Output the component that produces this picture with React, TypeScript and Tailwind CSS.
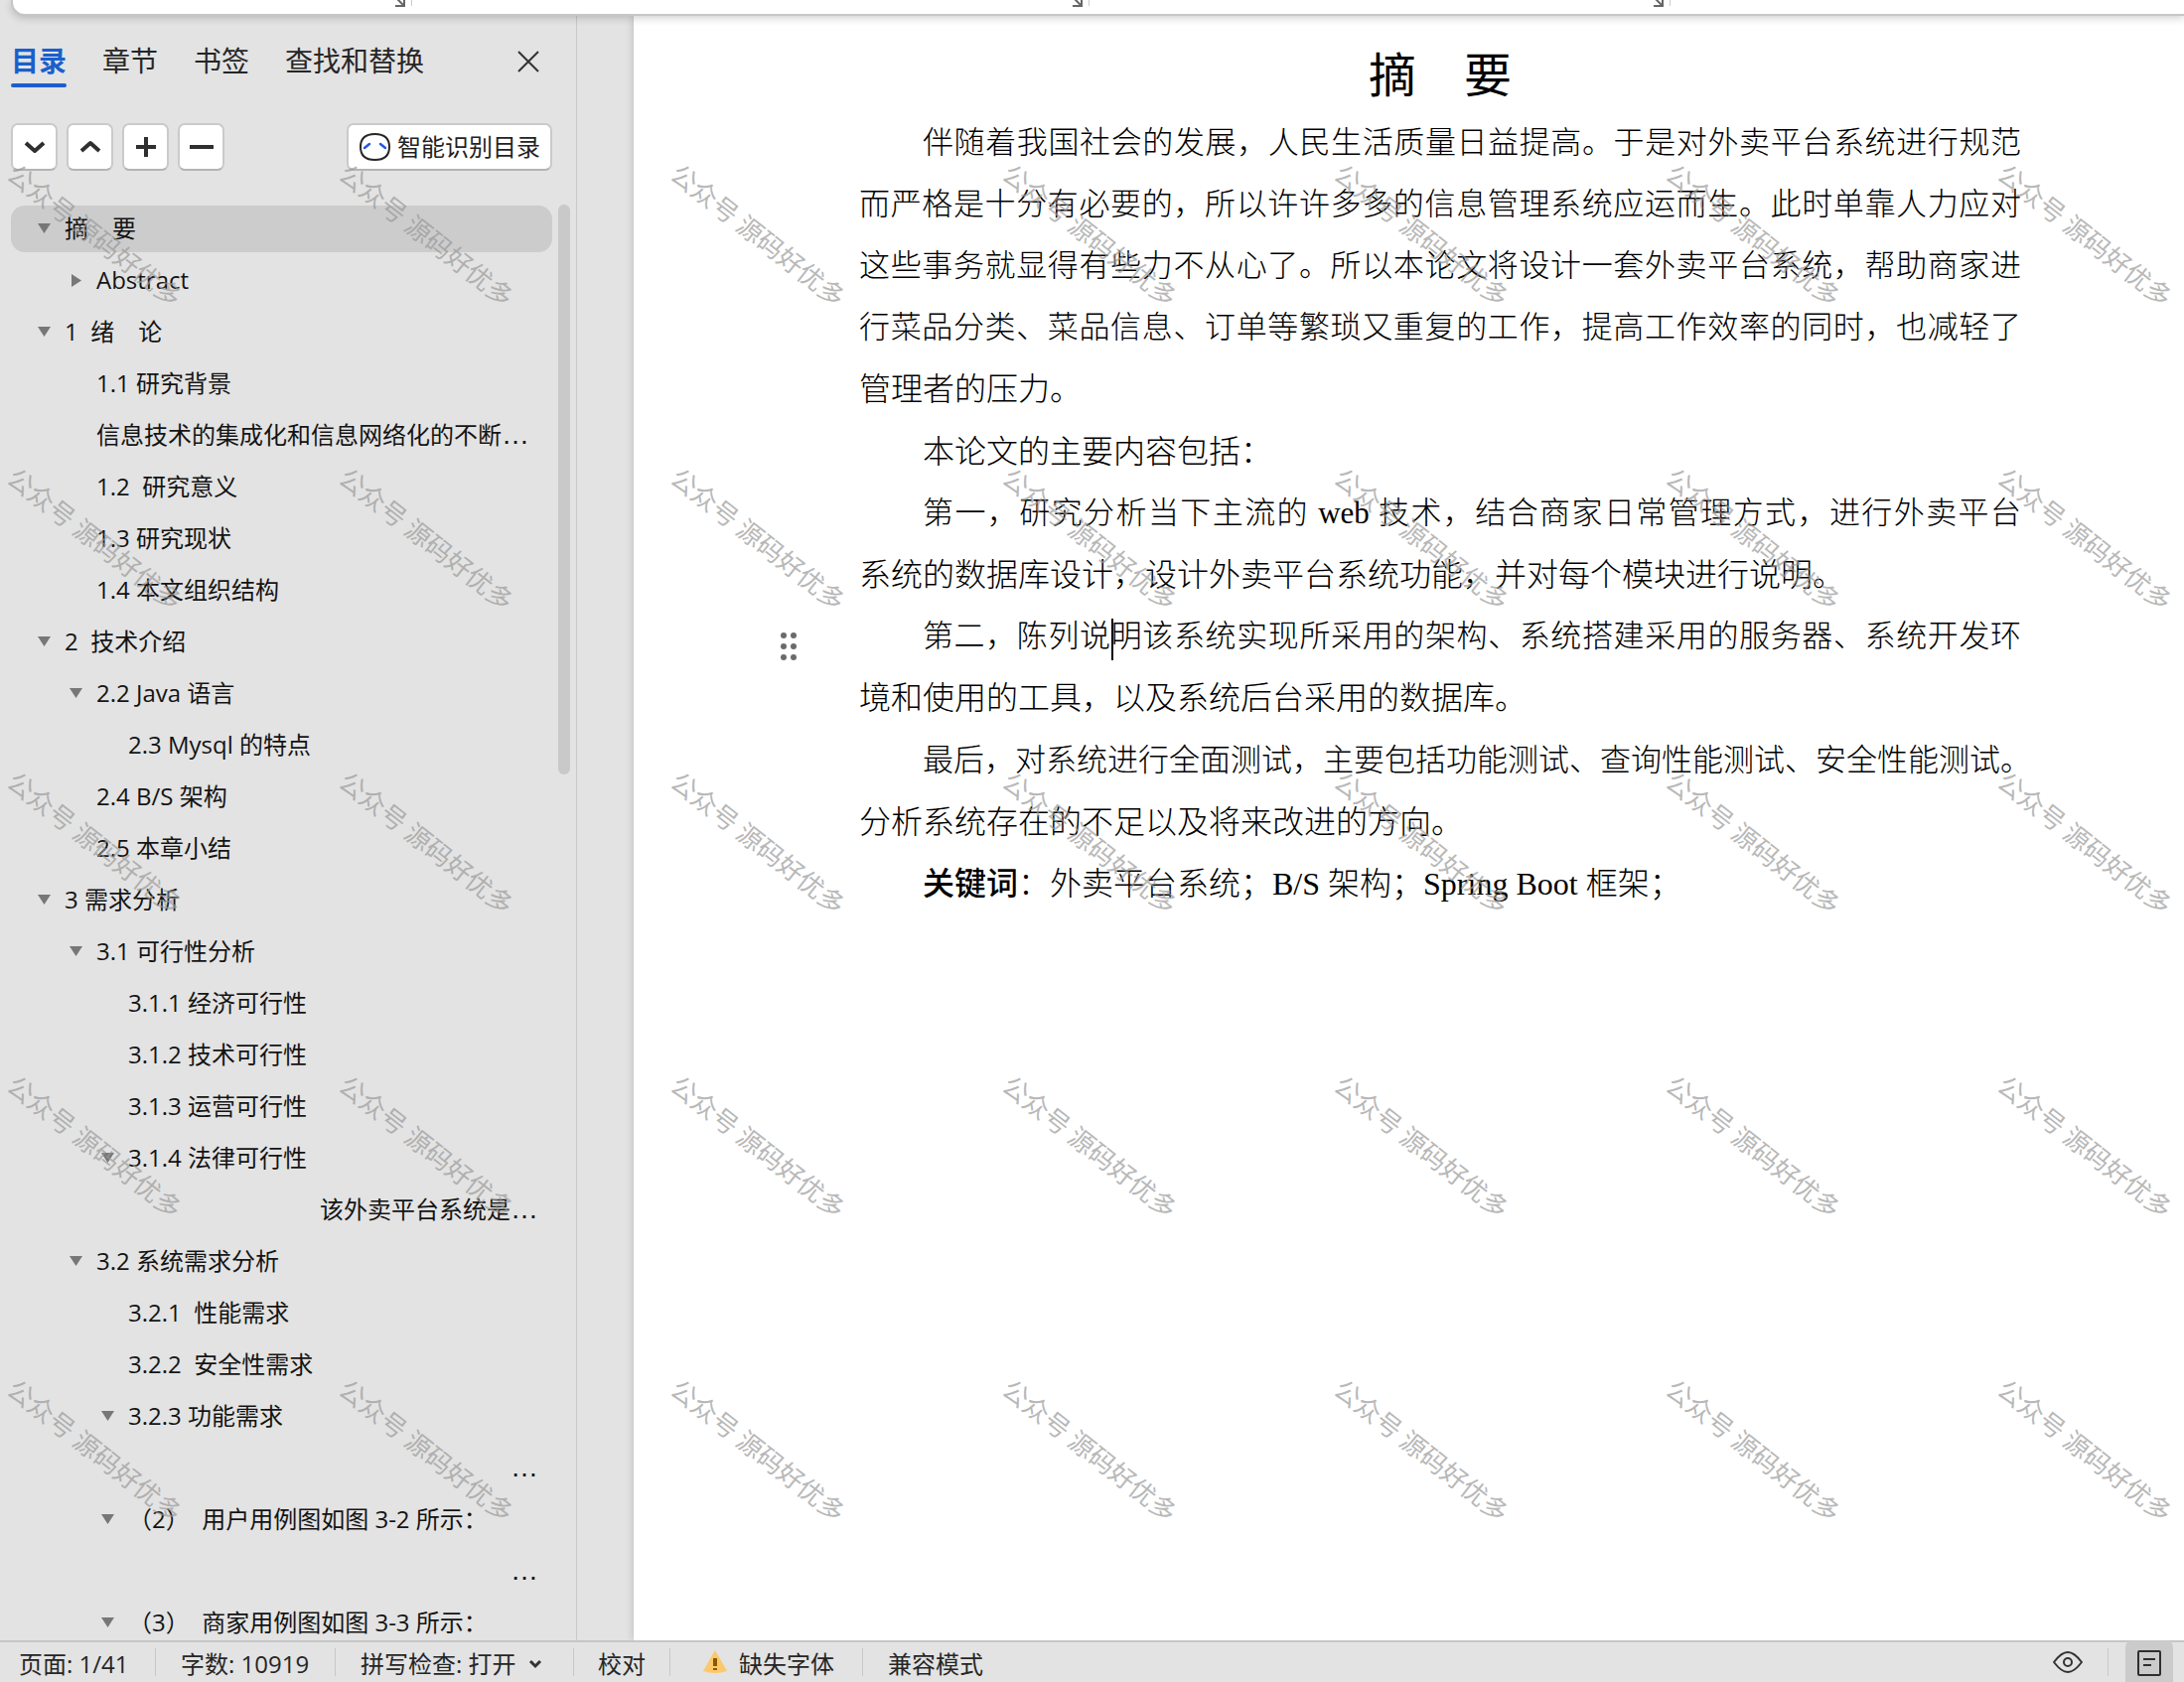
import React from "react";

type Item = {
  text: string;
  level: number;
  arrow?: "down" | "right";
  selected?: boolean;
  cut?: boolean;
  tail?: boolean;
};

const outline: Item[] = [
  { text: "摘　要", level: 0, arrow: "down", selected: true },
  { text: "Abstract", level: 1, arrow: "right" },
  { text: "1  绪　论", level: 0, arrow: "down" },
  { text: "1.1 研究背景", level: 1 },
  { text: "信息技术的集成化和信息网络化的不断", level: 1, cut: true },
  { text: "1.2  研究意义", level: 1 },
  { text: "1.3 研究现状", level: 1 },
  { text: "1.4 本文组织结构", level: 1 },
  { text: "2  技术介绍", level: 0, arrow: "down" },
  { text: "2.2 Java 语言", level: 1, arrow: "down" },
  { text: "2.3 Mysql 的特点", level: 2 },
  { text: "2.4 B/S 架构", level: 1 },
  { text: "2.5 本章小结", level: 1 },
  { text: "3 需求分析", level: 0, arrow: "down" },
  { text: "3.1 可行性分析", level: 1, arrow: "down" },
  { text: "3.1.1 经济可行性", level: 2 },
  { text: "3.1.2 技术可行性", level: 2 },
  { text: "3.1.3 运营可行性", level: 2 },
  { text: "3.1.4 法律可行性", level: 2, arrow: "down" },
  { text: "该外卖平台系统是", level: 2, cut: true, tail: true },
  { text: "3.2 系统需求分析", level: 1, arrow: "down" },
  { text: "3.2.1  性能需求", level: 2 },
  { text: "3.2.2  安全性需求", level: 2 },
  { text: "3.2.3 功能需求", level: 2, arrow: "down" },
  { text: "", level: 2, cut: true, tail: true },
  { text: "（2）  用户用例图如图 3-2 所示：", level: 2, arrow: "down" },
  { text: "", level: 2, cut: true, tail: true },
  { text: "（3）  商家用例图如图 3-3 所示：", level: 2, arrow: "down" },
];

const indent = ["pl-[22px]", "pl-[54px]", "pl-[86px]"];

function Row({ item }: { item: Item }) {
  return (
    <li className="flex h-[52px] items-center">
      <div
        className={`flex h-[47px] w-full items-center rounded-[14px] pr-[14px] ${indent[item.level]} ${
          item.selected ? "bg-[#cccccc]" : ""
        }`}
      >
        {item.arrow ? (
          <button type="button" aria-label="展开或折叠" className="flex h-6 w-8 shrink-0 items-center pl-[5px]">
            {item.arrow === "down" ? (
              <svg width="13" height="10" viewBox="0 0 13 10" fill="#777777"><path d="M0 0h13L6.500 10z" /></svg>
            ) : (
              <svg width="13" height="13" viewBox="0 0 13 13" fill="#777777"><path d="M2 0v13L12 6.500z" /></svg>
            )}
          </button>
        ) : (
          <span className="w-8 shrink-0" />
        )}
        <a href="#" className={`whitespace-pre ${item.tail ? "ml-auto" : ""}`}>
          {item.text}
          {item.cut && <span className="font-['Liberation_Sans',sans-serif] text-[28px] leading-6">…</span>}
        </a>
      </div>
    </li>
  );
}

function SquareButton({ label, d }: { label: string; d: string }) {
  return (
    <button
      type="button"
      aria-label={label}
      className="flex h-12 w-[47px] items-center justify-center rounded-[7px] border-2 border-[#cacaca] border-b-[#b4b4b4] bg-white"
    >
      <svg width="24" height="24" viewBox="0 0 24 24" fill="none" stroke="#2f2f2f" strokeWidth="4" strokeLinejoin="round">
        <path d={d} />
      </svg>
    </button>
  );
}

/* A line that fills the text column. */
function Full({ children, first }: { children: React.ReactNode; first?: boolean }) {
  return (
    <span className={`block text-justify text-[31px] whitespace-nowrap [text-align-last:justify] ${first ? "pl-16" : ""}`}>
      {children}
    </span>
  );
}

/* The closing line of a paragraph. */
function Last({ children, first }: { children: React.ReactNode; first?: boolean }) {
  return <span className={`block text-[32px] whitespace-nowrap ${first ? "pl-16" : ""}`}>{children}</span>;
}

function Launcher({ width }: { width: string }) {
  return (
    <div className={`flex h-2 shrink-0 items-start justify-end gap-[6px] ${width}`}>
      <svg width="11" height="8" viewBox="0 0 11 8" fill="none" stroke="#666666" strokeWidth="2">
        <path d="M3 -1L9 5M10 -1V6H1" />
      </svg>
      <span className="h-[6px] w-px bg-[#cccccc]" />
    </div>
  );
}

function Divider() {
  return <span className="h-7 w-px shrink-0 bg-[#c8c8c8]" />;
}

const marks = Array.from({ length: 35 }, (_, i) => i);

export default function App() {
  return (
    <div className="relative flex h-screen flex-col overflow-hidden bg-[#e3e3e3] font-['Open_Sans','Noto_Sans_CJK_SC',sans-serif] text-2xl text-[#141414]">
      <header className="relative z-10 ml-[11px] flex h-4 shrink-0 rounded-bl-[14px] border-b-2 border-l-2 border-[#c6c6c6] bg-white shadow-[0_2px_8px_rgba(0,0,0,0.2)]">
        <Launcher width="w-[402px]" />
        <Launcher width="w-[682px]" />
        <Launcher width="w-[585px]" />
      </header>

      <div className="flex min-h-0 flex-1">
        <aside className="flex w-[581px] shrink-0 flex-col border-r border-[#c9c9c9] pl-[11px]">
          <div className="flex h-[72px] shrink-0 items-end justify-between pr-[37px]">
            <nav className="flex gap-9 text-[28px] leading-[42px] text-[#262626]">
              <button type="button" className="relative pb-[6px] font-bold text-[#1b5fcc]">
                目录
                <span className="absolute inset-x-0 bottom-0 h-1 rounded-full bg-[#1b5fcc]" />
              </button>
              <button type="button" className="pb-[6px]">章节</button>
              <button type="button" className="pb-[6px]">书签</button>
              <button type="button" className="pb-[6px]">查找和替换</button>
            </nav>
            <button type="button" aria-label="关闭" className="mb-[15px]">
              <svg width="22" height="22" viewBox="0 0 22 22" fill="none" stroke="#333333" strokeWidth="2">
                <path d="M1 1L21 21M21 1L1 21" />
              </svg>
            </button>
          </div>

          <div className="mt-9 flex h-12 shrink-0 items-center gap-[9px] pr-6">
            <SquareButton label="展开" d="M3 8L12 16L21 8" />
            <SquareButton label="折叠" d="M3 16L12 8L21 16" />
            <SquareButton label="增加" d="M2 12H22M12 2V22" />
            <SquareButton label="减少" d="M0 12H24" />
            <button
              type="button"
              className="ml-auto flex h-12 items-center gap-[6px] rounded-[7px] border-2 border-[#cacaca] border-b-[#b4b4b4] bg-white px-[10px] text-[#222222]"
            >
              <svg width="33" height="30" viewBox="0 0 33 30" fill="none" strokeLinecap="round">
                <path d="M16.500 2C27 2 31 7 31 15S27 28 16.500 28S2 23 2 15S6 2 16.500 2Z" stroke="#262626" strokeWidth="2" />
                <path d="M6 16L11 12M22 12L27 16" stroke="#2456e6" strokeWidth="2.500" />
              </svg>
              <span className="leading-[36px]">智能识别目录</span>
            </button>
          </div>

          <div className="mt-8 flex min-h-0 flex-1 gap-[6px] pr-[6px]">
            <ul className="min-w-0 flex-1 overflow-hidden leading-[36px]">
              {outline.map((item, i) => (
                <Row key={i} item={item} />
              ))}
            </ul>
            <div className="mt-[2px] h-[574px] w-3 rounded-full bg-[#c9c9c9]" />
          </div>
        </aside>

        <main className="flex min-w-0 flex-1 pl-[57px]">
          <article className="min-w-0 flex-1 bg-white pr-[164px] pl-[227px] font-['Liberation_Serif','Noto_Sans_CJK_SC',serif] leading-[62px] text-black shadow-[0_0_8px_rgba(0,0,0,0.2)]">
            <h1 className="mt-[26px] mb-px text-center text-[48px] leading-[70px] font-normal">摘　要</h1>
            <div className="flex flex-col font-light">
              <p>
                <Full first>伴随着我国社会的发展，人民生活质量日益提高。于是对外卖平台系统进行规范</Full>
                <Full>而严格是十分有必要的，所以许许多多的信息管理系统应运而生。此时单靠人力应对</Full>
                <Full>这些事务就显得有些力不从心了。所以本论文将设计一套外卖平台系统，帮助商家进</Full>
                <Full>行菜品分类、菜品信息、订单等繁琐又重复的工作，提高工作效率的同时，也减轻了</Full>
                <Last>管理者的压力。</Last>
              </p>
              <p className="pt-px">
                <Last first>本论文的主要内容包括：</Last>
              </p>
              <p>
                <Full first>第一，研究分析当下主流的 web 技术，结合商家日常管理方式，进行外卖平台</Full>
                <Last>系统的数据库设计，设计外卖平台系统功能，并对每个模块进行说明。</Last>
              </p>
              <div className="relative">
                <svg className="absolute top-[26px] -left-20" width="18" height="30" viewBox="0 0 18 30" fill="#6b6b6b">
                  <circle cx="4" cy="4" r="3" /><circle cx="14" cy="4" r="3" />
                  <circle cx="4" cy="15" r="3" /><circle cx="14" cy="15" r="3" />
                  <circle cx="4" cy="26" r="3" /><circle cx="14" cy="26" r="3" />
                </svg>
                <p>
                  <Full first>
                    第二，陈列说<span className="relative"><i className="absolute top-0 left-0 h-[42px] w-[2px] bg-black" />明</span>该系统实现所采用的架构、系统搭建采用的服务器、系统开发环
                  </Full>
                  <Last>境和使用的工具，以及系统后台采用的数据库。</Last>
                </p>
              </div>
              <p className="pt-px">
                <Full first>最后，对系统进行全面测试，主要包括功能测试、查询性能测试、安全性能测试。</Full>
                <Last>分析系统存在的不足以及将来改进的方向。</Last>
              </p>
              <p>
                <Last first><b className="font-medium">关键词</b>：外卖平台系统；B/S 架构；Spring Boot 框架；</Last>
              </p>
            </div>
          </article>
        </main>
      </div>

      <footer className="z-10 flex h-[42px] shrink-0 items-center border-t-2 border-[#c6c6c6] bg-[#e3e3e3] pr-[11px] pl-[19px] leading-[36px] whitespace-nowrap text-[#262626]">
        <span className="w-[137px] shrink-0 pt-1">页面: 1/41</span>
        <Divider />
        <span className="w-[180px] shrink-0 pt-1 pl-[25px]">字数: 10919</span>
        <Divider />
        <button type="button" className="flex w-[239px] shrink-0 items-center gap-[12px] pt-1 pl-[25px]">
          拼写检查: 打开
          <svg width="14" height="10" viewBox="0 0 14 10" fill="none" stroke="#333333" strokeWidth="3"><path d="M2 2L7 7L12 2" /></svg>
        </button>
        <Divider />
        <button type="button" className="w-[96px] shrink-0 pt-1 pl-6 text-left">校对</button>
        <Divider />
        <button type="button" className="flex w-[193px] shrink-0 items-center gap-3 pt-1 pl-[33px]">
          <svg className="mb-1" width="24" height="24" viewBox="0 0 24 24">
            <path d="M12 0L24 21Q12 25 0 21Z" fill="#fbc96b" />
            <path d="M10 8h4v8h-4zM10 18h4v2h-4z" fill="#8a5a00" />
          </svg>
          缺失字体
        </button>
        <Divider />
        <button type="button" className="pt-1 pl-[25px]">兼容模式</button>
        <div className="ml-auto flex items-center">
          <button type="button" aria-label="护眼模式" className="mr-6">
            <svg width="32" height="24" viewBox="0 0 32 24" fill="none" stroke="#333333" strokeWidth="2">
              <path d="M2 12C8 4 12 2 16 2S24 4 30 12C24 20 20 22 16 22S8 20 2 12Z" strokeLinejoin="round" />
              <circle cx="16" cy="12" r="4" />
            </svg>
          </button>
          <Divider />
          <button type="button" aria-label="页面视图" className="-mt-[2px] ml-[17px] flex h-[42px] w-12 items-center justify-center rounded-t-[7px] bg-[#cbcbcb] pt-1">
            <svg width="26" height="28" viewBox="0 0 26 28" fill="none" stroke="#2f2f2f" strokeWidth="2">
              <rect x="2" y="2" width="22" height="24" rx="1" />
              <path d="M7 10H19M7 16H15" />
            </svg>
          </button>
        </div>
      </footer>

      <div
        aria-hidden="true"
        className="pointer-events-none absolute top-[83px] -left-[71px] z-20 grid grid-cols-[repeat(7,334px)] auto-rows-[306px] font-['Noto_Sans_CJK_SC',sans-serif] text-[26px] text-[#999999]/70"
      >
        {marks.map((i) => (
          <span key={i} className="flex items-center justify-center">
            <span className="rotate-38 whitespace-nowrap">公众号 源码好优多</span>
          </span>
        ))}
      </div>
    </div>
  );
}
